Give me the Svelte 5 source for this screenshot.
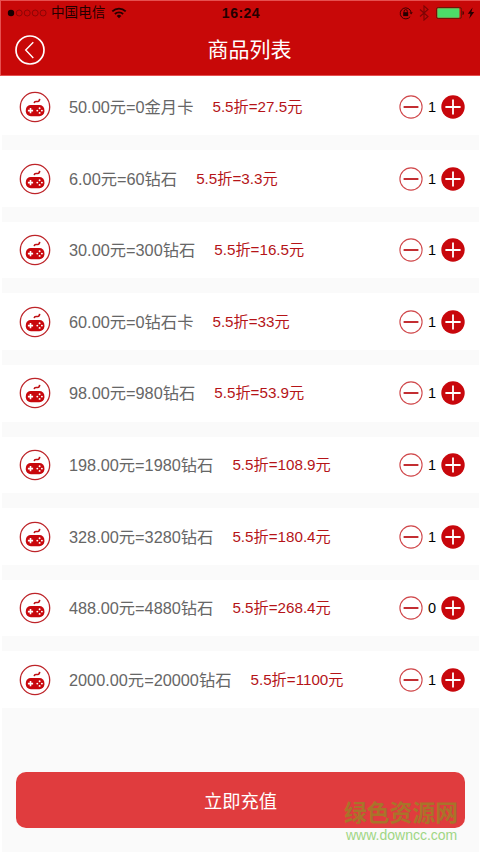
<script lang="ts">
    let goods = [
        { name: "50.00元=0金月卡", price: "5.5折=27.5元", count: 1 },
        { name: "6.00元=60钻石", price: "5.5折=3.3元", count: 1 },
        { name: "30.00元=300钻石", price: "5.5折=16.5元", count: 1 },
        { name: "60.00元=0钻石卡", price: "5.5折=33元", count: 1 },
        { name: "98.00元=980钻石", price: "5.5折=53.9元", count: 1 },
        { name: "198.00元=1980钻石", price: "5.5折=108.9元", count: 1 },
        { name: "328.00元=3280钻石", price: "5.5折=180.4元", count: 1 },
        { name: "488.00元=4880钻石", price: "5.5折=268.4元", count: 0 },
        { name: "2000.00元=20000钻石", price: "5.5折=1100元", count: 1 }
    ];

    function minus(i: number) {
        if (goods[i].count > 0) goods[i].count -= 1;
    }

    function plus(i: number) {
        goods[i].count += 1;
    }
</script>

<svelte:head>
    <title>商品列表</title>
</svelte:head>

<div class="page">
    <header>
        <div class="status">
            <div class="carrier">
                <svg class="signal" width="40" height="8" viewBox="0 0 40 8">
                    <circle cx="4" cy="4" r="3.2" fill="#170000" />
                    {#each [12.2, 20.2, 28.2, 36.1] as x}
                        <circle cx={x} cy="4" r="3" fill="none" stroke="#7d0505" stroke-width="0.8" />
                    {/each}
                </svg>
                <span>中国电信</span>
                <svg class="wifi" width="16" height="12" viewBox="0 0 16 12" fill="none" stroke="#250000" stroke-width="1.8">
                    <path d="M1.3 4.4a9.4 9.4 0 0 1 13.4 0M3.9 7a5.8 5.8 0 0 1 8.2 0" />
                    <path d="M8 11.2L5.7 8.9a3.3 3.3 0 0 1 4.6 0z" fill="#250000" stroke="none" />
                </svg>
            </div>
            <b>16:24</b>
            <div class="power">
                <svg width="14" height="14" viewBox="0 0 14 14" fill="none" stroke="#3a0000" stroke-width="1">
                    <path d="M11.2 10.6a5.5 5.5 0 1 1 .9-4.4" />
                    <path d="M10.4 6.2h3.4l-1.7 2.3z" fill="#3a0000" stroke="none" />
                    <path d="M5.1 6.5V5.2a1.6 1.6 0 0 1 3.2 0v1.3" />
                    <rect x="4.2" y="6.2" width="5" height="3.9" fill="#250000" stroke="none" />
                </svg>
                <svg class="bluetooth" width="10" height="16" viewBox="0 0 10 16" fill="none" stroke="#7b0505" stroke-width="1.1">
                    <path d="M1 4.5l8 7-4 3.6V.9l4 3.6-8 7" />
                </svg>
                <svg class="battery" width="28" height="12" viewBox="0 0 28 12">
                    <rect x=".5" y=".5" width="25" height="11" rx="1.8" fill="none" stroke="#6d1506" />
                    <rect x="1.3" y="1.3" width="22.2" height="9.4" rx=".8" fill="#4cdc68" />
                    <path d="M26.5 4q1.5.2 1.5 2t-1.5 2z" fill="#4b0000" />
                </svg>
                <svg class="bolt" width="8" height="12" viewBox="0 0 8 12">
                    <path d="M5.6.4L.8 6.8h2.7L2.2 11.7 7.2 5H4.4z" fill="#250000" />
                </svg>
            </div>
        </div>
        <div class="nav">
            <button class="back" aria-label="返回">
                <svg width="30" height="30" viewBox="0 0 30 30" fill="none" stroke="#fff">
                    <circle cx="15" cy="15" r="14" stroke-width="1.7" />
                    <path d="M18.3 7.2L10.7 15l7.6 7.9" stroke-width="1.4" />
                </svg>
            </button>
            <h1>商品列表</h1>
        </div>
    </header>

    <ul>
        {#each goods as item, i}
            <li>
                <svg class="game" width="32" height="32" viewBox="0 0 32 32">
                    <circle cx="16" cy="16" r="14.7" fill="#fff" stroke="#bd2429" stroke-width="1.3" />
                    <path d="M15.2 12.2q.2-1.7 1.7-1.7h1.9q1.5 0 1.9-2.6" fill="none" stroke="#bd1014" stroke-width="1.6" />
                    <rect x="6.8" y="14" width="18.6" height="11.2" rx="5" fill="#c8070c" />
                    <path d="M11.5 17v5.2M8.9 19.6h5.2" stroke="#fff" stroke-width="1.6" />
                    <g fill="#fff">
                        <circle cx="20.6" cy="17.3" r=".95" />
                        <circle cx="20.6" cy="21.9" r=".95" />
                        <circle cx="18.3" cy="19.6" r=".95" />
                        <circle cx="22.9" cy="19.6" r=".95" />
                    </g>
                </svg>
                <span class="name">{item.name}</span>
                <span class="price">{item.price}</span>
                <div class="stepper">
                    <button aria-label="减少" on:click={() => minus(i)}>
                        <svg width="24" height="24" viewBox="0 0 24 24" fill="none">
                            <circle cx="12" cy="12" r="11.1" stroke="#d0484b" stroke-width="1.1" />
                            <path d="M4.6 12h14.8" stroke="#bd171b" stroke-width="1.8" />
                        </svg>
                    </button>
                    <span class="count">{item.count}</span>
                    <button aria-label="增加" on:click={() => plus(i)}>
                        <svg width="24" height="24" viewBox="0 0 24 24">
                            <circle cx="12" cy="12" r="11.7" fill="#c8070c" />
                            <path d="M12 4.4v15.2M4.4 12h15.2" stroke="#fff" stroke-width="1.8" />
                        </svg>
                    </button>
                </div>
            </li>
        {/each}
    </ul>

    <button class="submit">立即充值</button>

    <div class="watermark">
        <strong>绿色资源网</strong>
        <span>www.downcc.com</span>
    </div>
</div>

<style>
    :global(body) {
        background: #fff;
    }

    .page {
        position: relative;
        width: 480px;
        height: 853px;
        overflow: hidden;
        font-family: "Liberation Sans", "Noto Sans CJK SC", sans-serif;
        background: linear-gradient(#fafafa, #fafafa) 2px 0 / 477px 852px no-repeat;
    }

    header {
        height: 76px;
        box-sizing: border-box;
        background: #c80808;
        border: 1px solid #e65050;
        border-right: 0;
    }

    .status {
        display: grid;
        grid-template-columns: 1fr auto 1fr;
        align-items: center;
        height: 23px;
        padding: 0 5px 0 6px;
        color: #250000;
    }

    .carrier {
        display: flex;
        align-items: center;
        font-size: 13.6px;
        line-height: 22px;
    }

    .carrier span {
        margin: 0 6px 0 4px;
    }

    .status b {
        font-size: 14px;
        letter-spacing: 0.5px;
    }

    .power {
        display: flex;
        align-items: center;
        justify-content: flex-end;
    }

    .bluetooth {
        margin: 0 7px 0 6px;
    }

    .bolt {
        margin-left: 3px;
    }

    button {
        display: block;
        padding: 0;
        border: 0;
        background: none;
        font-family: inherit;
    }

    svg {
        display: block;
        flex: none;
    }

    .nav {
        display: grid;
        grid-template-columns: 80px 1fr 62px;
        align-items: center;
        height: 52px;
    }

    .back {
        margin-left: 14px;
    }

    h1 {
        margin: 0;
        text-align: center;
        font-size: 21px;
        font-weight: 400;
        line-height: 30px;
        color: #fff;
    }

    ul {
        display: flex;
        flex-direction: column;
        gap: 15px;
        margin: 0;
        padding: 0;
        list-style: none;
    }

    li {
        display: flex;
        align-items: center;
        height: 56.6px;
        padding: 0 15px 0 19px;
        background: #fff;
    }

    li:first-child {
        padding-top: 2.7px;
    }

    .game {
        margin-right: 18px;
    }

    .name {
        font-size: 16.3px;
        line-height: 24px;
        color: #666;
        white-space: nowrap;
    }

    .price {
        margin-left: 19px;
        font-size: 15.2px;
        line-height: 24px;
        color: #b51418;
        white-space: nowrap;
    }

    .stepper {
        display: flex;
        align-items: center;
        margin-left: auto;
    }

    .count {
        width: 18px;
        text-align: center;
        font-size: 14.5px;
        line-height: 24px;
        color: #000;
    }

    .submit {
        width: 449px;
        height: 56px;
        margin: 63.5px 0 0 16px;
        border-radius: 10px;
        background: #e03c3e;
        font-size: 18.3px;
        color: #fff;
    }

    .watermark {
        position: absolute;
        left: 344px;
        top: 799px;
        display: flex;
        flex-direction: column;
        white-space: nowrap;
    }

    .watermark strong {
        font-size: 22.8px;
        line-height: 28px;
        color: #a8742a;
    }

    .watermark span {
        margin-left: 2px;
        font-size: 14px;
        line-height: 16px;
        color: #a0d684;
    }
</style>
